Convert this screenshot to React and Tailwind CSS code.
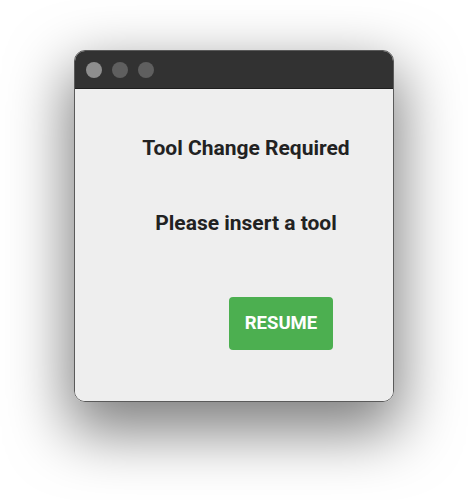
export default function App() {
  return (
    <div className="w-[468px] h-[500px] bg-white flex justify-center pt-[50px]" style={{ fontFamily: "Roboto, 'Liberation Sans', sans-serif" }}>
      <div className="w-[320px] h-[352px] rounded-[11px] border border-[#5a5a5a] overflow-hidden flex flex-col shadow-[0_24px_60px_6px_rgba(0,0,0,0.5)]">
        {/* title bar */}
        <div className="h-[38px] bg-[#323232] border-b border-[#1e1e1e] flex items-center gap-[10px] pl-[11px]">
          <span className="w-4 h-4 rounded-full bg-[#8e8e8e]" />
          <span className="w-4 h-4 rounded-full bg-[#5f5f5f]" />
          <span className="w-4 h-4 rounded-full bg-[#5f5f5f]" />
        </div>
        {/* body */}
        <div className="flex-1 bg-[#eeeeee] flex flex-col items-center pl-[24px] pt-[44px]">
          <h1 className="text-[21px] font-bold text-[#222222] leading-[30px]">Tool Change Required</h1>
          <p className="mt-[45px] text-[21px] font-bold text-[#222222] leading-[30px]">Please insert a tool</p>
          <div className="self-stretch flex justify-end pr-[60px] mt-[59px]">
            <button className="w-[104px] h-[53px] rounded-[4px] bg-[#4caf50] text-white text-[18.5px] font-bold">RESUME</button>
          </div>
        </div>
      </div>
    </div>
  );
}
